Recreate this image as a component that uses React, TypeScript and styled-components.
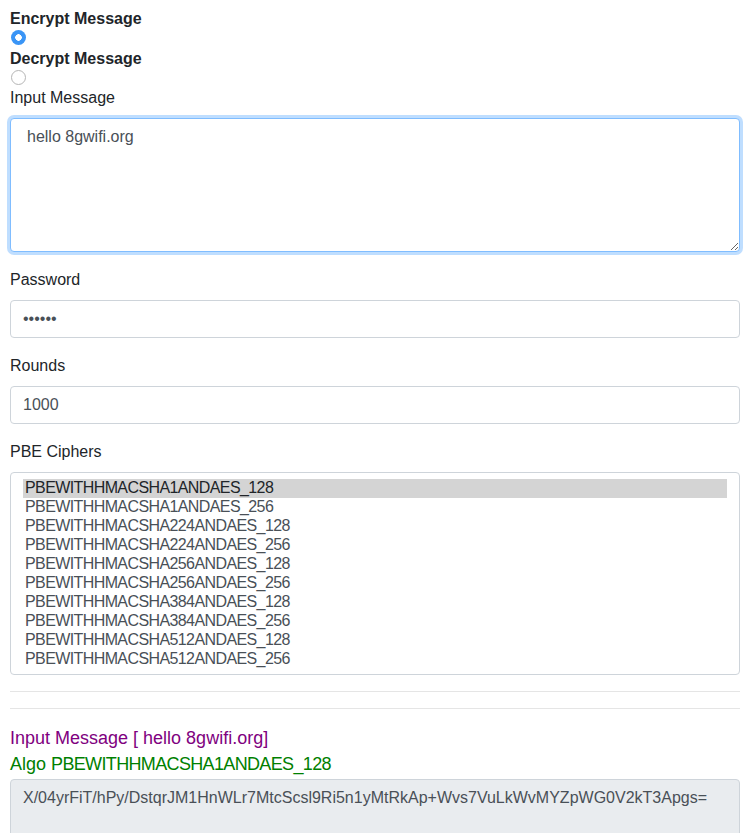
import React, { useState } from "react";
import styled, { createGlobalStyle } from "styled-components";

const GlobalStyle = createGlobalStyle`
  * { box-sizing: border-box; }
  body {
    margin: 0;
    background: #fff;
    font-family: "Liberation Sans", Arial, Helvetica, sans-serif;
    font-size: 16px;
    line-height: 1.5;
    color: #212529;
  }
`;

const Page = styled.div`
  padding: 6px 12px 0 10px;
`;

const ModeLabel = styled.label`
  display: block;
  font-weight: bold;
  line-height: 24px;
  padding-top: 1px;
  margin-bottom: -1px;
`;

const Radio = styled.input.attrs({ type: "radio" })`
  appearance: none;
  display: block;
  margin: 0 0 0 1px;
  width: 15px;
  height: 15px;
  border-radius: 50%;
  border: 1px solid #b5b5b5;
  background: #fff;
  &:checked {
    border: none;
    background: radial-gradient(circle, #fff 0 3px, #3a95f6 3.5px);
  }
`;

const RadioSlot = styled.div`
  height: 16px;
`;

const FieldGroup = styled.div`
  margin-bottom: 16px;
`;

const FieldLabel = styled.label`
  display: block;
  line-height: 24px;
  margin-bottom: 8px;
  padding-top: 1px;
  margin-top: -1px;
`;

const controlBase = `
  display: block;
  width: 100%;
  font-family: "Liberation Sans", Arial, Helvetica, sans-serif;
  font-size: 16px;
  line-height: 24px;
  color: #495057;
  background: #fff;
  border: 1px solid #ced4da;
  border-radius: 4px;
  padding: 6px 12px;
  outline: none;
`;

const TextArea = styled.textarea<{ $focused?: boolean; $readOnlyLook?: boolean }>`
  ${controlBase}
  padding-left: 16px;
  resize: vertical;
  ${(p) =>
    p.$focused
      ? `border-color: #80bdff; box-shadow: 0 0 0 3px rgba(0,123,255,.25);`
      : ""}
  ${(p) =>
    p.$readOnlyLook ? `background: #e9ecef; padding-left: 12px; resize: none;` : ""}
`;

const TextInput = styled.input`
  ${controlBase}
  height: 38px;
`;

const ListSelect = styled.select`
  ${controlBase}
  padding: 6px 12px;
  height: 203px;
  overflow-y: hidden;
  option {
    padding: 0 2px;
    line-height: 19px;
    min-height: 19px;
    color: #495057;
    letter-spacing: -0.6px;
  }
  option:checked {
    background: #d4d4d4;
    color: #212529;
  }
`;

const Rule = styled.hr`
  margin: 16px 0;
  border: 0;
  border-top: 1px solid rgba(0, 0, 0, 0.1);
`;

const ResultLine = styled.div<{ $color: string }>`
  color: ${(p) => p.$color};
  font-size: 18px;
  line-height: 26px;
`;

const ResultBlock = styled.div`
  margin-top: 1px;
`;

const Condensed = styled.span`
  letter-spacing: -0.65px;
`;

const OutputWrap = styled.div`
  margin-top: 2px;
`;

const ciphers = [
  "PBEWITHHMACSHA1ANDAES_128",
  "PBEWITHHMACSHA1ANDAES_256",
  "PBEWITHHMACSHA224ANDAES_128",
  "PBEWITHHMACSHA224ANDAES_256",
  "PBEWITHHMACSHA256ANDAES_128",
  "PBEWITHHMACSHA256ANDAES_256",
  "PBEWITHHMACSHA384ANDAES_128",
  "PBEWITHHMACSHA384ANDAES_256",
  "PBEWITHHMACSHA512ANDAES_128",
  "PBEWITHHMACSHA512ANDAES_256",
];

export default function App() {
  const [mode, setMode] = useState("encrypt");
  const [message, setMessage] = useState("hello 8gwifi.org");
  const [password, setPassword] = useState("123456");
  const [rounds, setRounds] = useState("1000");
  const [cipher, setCipher] = useState(ciphers[0]);

  return (
    <Page>
      <GlobalStyle />
      <ModeLabel htmlFor="enc">Encrypt Message</ModeLabel>
      <RadioSlot>
        <Radio
          id="enc"
          name="mode"
          checked={mode === "encrypt"}
          onChange={() => setMode("encrypt")}
        />
      </RadioSlot>
      <ModeLabel htmlFor="dec">Decrypt Message</ModeLabel>
      <RadioSlot>
        <Radio
          id="dec"
          name="mode"
          checked={mode === "decrypt"}
          onChange={() => setMode("decrypt")}
        />
      </RadioSlot>
      <FieldGroup>
        <FieldLabel>Input Message</FieldLabel>
        <TextArea
          $focused
          rows={5}
          value={message}
          onChange={(e) => setMessage(e.target.value)}
        />
      </FieldGroup>
      <FieldGroup>
        <FieldLabel>Password</FieldLabel>
        <TextInput
          type="password"
          value={password}
          onChange={(e) => setPassword(e.target.value)}
        />
      </FieldGroup>
      <FieldGroup>
        <FieldLabel>Rounds</FieldLabel>
        <TextInput value={rounds} onChange={(e) => setRounds(e.target.value)} />
      </FieldGroup>
      <FieldGroup>
        <FieldLabel>PBE Ciphers</FieldLabel>
        <ListSelect
          size={10}
          value={cipher}
          onChange={(e) => setCipher(e.target.value)}
        >
          {ciphers.map((c) => (
            <option key={c} value={c}>
              {c}
            </option>
          ))}
        </ListSelect>
      </FieldGroup>
      <Rule />
      <Rule />
      <ResultBlock>
        <ResultLine $color="#800080">Input Message [ {message}]</ResultLine>
        <ResultLine $color="#008000">
          Algo <Condensed>{cipher}</Condensed>
        </ResultLine>
      </ResultBlock>
      <OutputWrap>
        <TextArea
          $readOnlyLook
          readOnly
          rows={3}
          value="X/04yrFiT/hPy/DstqrJM1HnWLr7MtcScsl9Ri5n1yMtRkAp+Wvs7VuLkWvMYZpWG0V2kT3Apgs="
        />
      </OutputWrap>
    </Page>
  );
}
